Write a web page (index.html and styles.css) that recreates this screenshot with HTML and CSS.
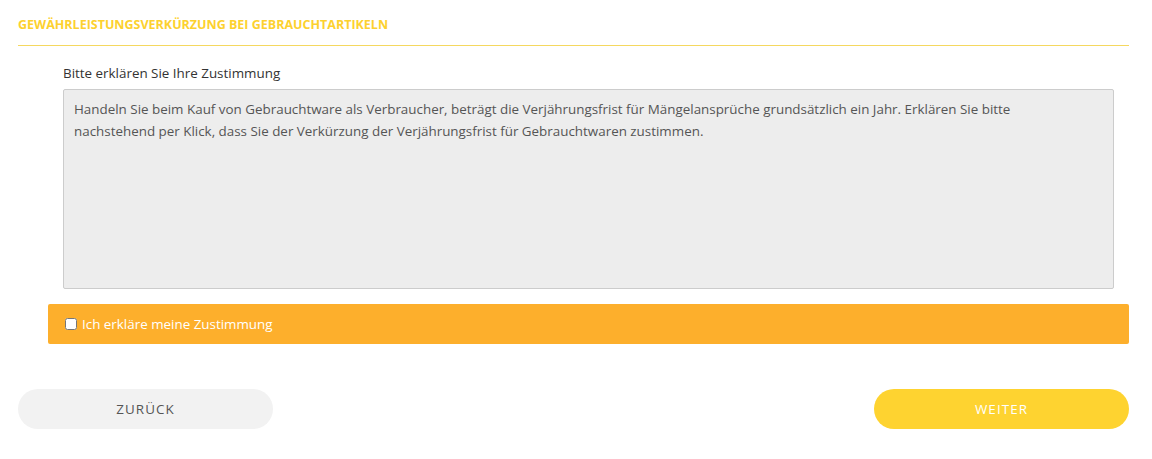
FILE: index.html
```html
<!DOCTYPE html>
<html lang="de">
<head>
<meta charset="utf-8">
<title>Gewährleistung</title>
<link rel="stylesheet" href="styles.css">
</head>
<body>
<div class="page">
  <h2 class="section-title">Gewährleistungsverkürzung bei Gebrauchtartikeln</h2>
  <div class="consent">
    <label class="field-label">Bitte erklären Sie Ihre Zustimmung</label>
    <div class="textbox">Handeln Sie beim Kauf von Gebrauchtware als Verbraucher, beträgt die Verjährungsfrist für Mängelansprüche grundsätzlich ein Jahr. Erklären Sie bitte nachstehend per Klick, dass Sie der Verkürzung der Verjährungsfrist für Gebrauchtwaren zustimmen.</div>
  </div>
  <div class="agree-bar">
    <label class="agree"><input type="checkbox" class="agree-box"> Ich erkläre meine Zustimmung</label>
  </div>
  <div class="actions">
    <button class="btn btn-back">Zurück</button>
    <button class="btn btn-next">Weiter</button>
  </div>
</div>
</body>
</html>
```

FILE: styles.css
```css
html, body {
  margin: 0;
  padding: 0;
  background: #fff;
}
body {
  font-family: "Open Sans", "Noto Sans", sans-serif;
  color: #444;
}
.page {
  padding: 16px 23px 0 18px;
}
.section-title {
  margin: 0;
  font-size: 12.5px;
  font-weight: 700;
  text-transform: uppercase;
  color: #fdd12e;
  line-height: 18px;
  padding-bottom: 11px;
  border-bottom: 1px solid #f5d860;
}
.consent {
  padding: 17px 15px 0 45px;
}
.field-label {
  display: block;
  font-size: 13.4px;
  line-height: 20px;
  color: #333;
  margin-bottom: 6px;
}
.textbox {
  height: 184px;
  background: #ededed;
  border: 1px solid #ccc;
  border-radius: 2px;
  padding: 8px 40px 6px 10px;
  font-size: 13.4px;
  line-height: 22px;
  color: #555;
}
.agree-bar {
  margin: 15px 0 0 30px;
  height: 40px;
  background: #fdaf2c;
  border-radius: 2px;
  display: flex;
  align-items: center;
  padding-left: 17px;
}
.agree {
  display: flex;
  align-items: center;
  color: #fff;
  font-size: 13.4px;
}
.agree-box {
  width: 12px;
  height: 12px;
  margin: 0 5px 0 0;
}
.actions {
  display: flex;
  justify-content: space-between;
  margin-top: 45px;
}
.btn {
  width: 255px;
  height: 40px;
  border: 0;
  border-radius: 20px;
  font-family: inherit;
  font-size: 13.4px;
  text-transform: uppercase;
  letter-spacing: 1.1px;
  cursor: pointer;
}
.btn-back {
  background: #f2f2f2;
  color: #555;
}
.btn-next {
  background: #fed330;
  color: #fff;
}
```
